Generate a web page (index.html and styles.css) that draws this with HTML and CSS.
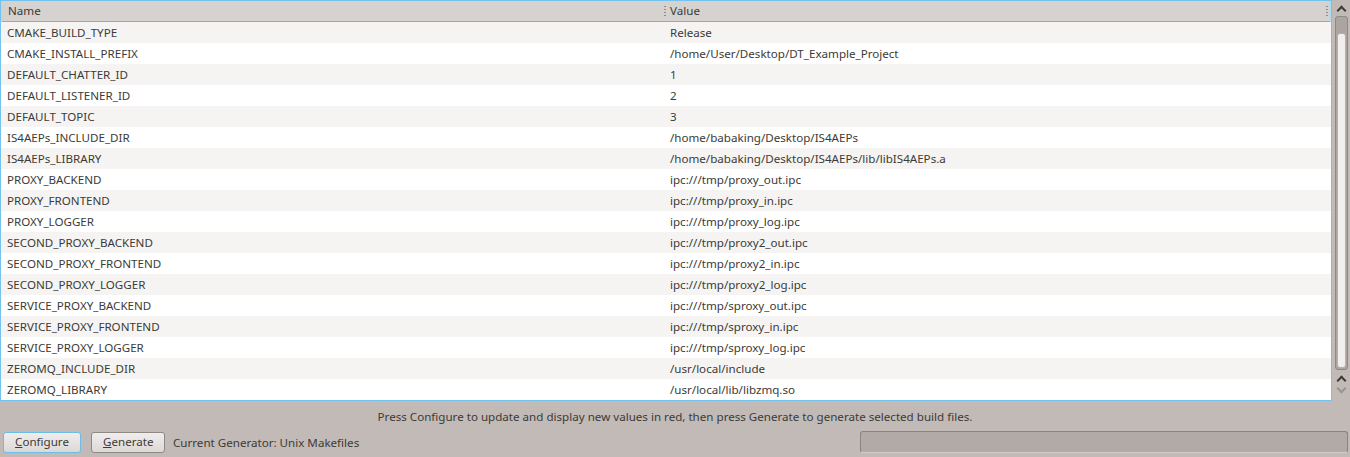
FILE: index.html
```html
<!DOCTYPE html>
<html>
<head>
<meta charset="utf-8">
<link rel="stylesheet" href="styles.css">
</head>
<body>
<div class="app">
  <div class="tablearea">
    <div class="table">
      <div class="header">
        <div class="hcell name">Name</div>
        <div class="grip"></div>
        <div class="hcell value">Value</div>
        <div class="grip right"></div>
      </div>
      <div class="rows">
        <div class="row alt"><div class="cell name">CMAKE_BUILD_TYPE</div><div class="cell value">Release</div></div>
        <div class="row"><div class="cell name">CMAKE_INSTALL_PREFIX</div><div class="cell value">/home/User/Desktop/DT_Example_Project</div></div>
        <div class="row alt"><div class="cell name">DEFAULT_CHATTER_ID</div><div class="cell value">1</div></div>
        <div class="row"><div class="cell name">DEFAULT_LISTENER_ID</div><div class="cell value">2</div></div>
        <div class="row alt"><div class="cell name">DEFAULT_TOPIC</div><div class="cell value">3</div></div>
        <div class="row"><div class="cell name">IS4AEPs_INCLUDE_DIR</div><div class="cell value">/home/babaking/Desktop/IS4AEPs</div></div>
        <div class="row alt"><div class="cell name">IS4AEPs_LIBRARY</div><div class="cell value">/home/babaking/Desktop/IS4AEPs/lib/libIS4AEPs.a</div></div>
        <div class="row"><div class="cell name">PROXY_BACKEND</div><div class="cell value">ipc:///tmp/proxy_out.ipc</div></div>
        <div class="row alt"><div class="cell name">PROXY_FRONTEND</div><div class="cell value">ipc:///tmp/proxy_in.ipc</div></div>
        <div class="row"><div class="cell name">PROXY_LOGGER</div><div class="cell value">ipc:///tmp/proxy_log.ipc</div></div>
        <div class="row alt"><div class="cell name">SECOND_PROXY_BACKEND</div><div class="cell value">ipc:///tmp/proxy2_out.ipc</div></div>
        <div class="row"><div class="cell name">SECOND_PROXY_FRONTEND</div><div class="cell value">ipc:///tmp/proxy2_in.ipc</div></div>
        <div class="row alt"><div class="cell name">SECOND_PROXY_LOGGER</div><div class="cell value">ipc:///tmp/proxy2_log.ipc</div></div>
        <div class="row"><div class="cell name">SERVICE_PROXY_BACKEND</div><div class="cell value">ipc:///tmp/sproxy_out.ipc</div></div>
        <div class="row alt"><div class="cell name">SERVICE_PROXY_FRONTEND</div><div class="cell value">ipc:///tmp/sproxy_in.ipc</div></div>
        <div class="row"><div class="cell name">SERVICE_PROXY_LOGGER</div><div class="cell value">ipc:///tmp/sproxy_log.ipc</div></div>
        <div class="row alt"><div class="cell name">ZEROMQ_INCLUDE_DIR</div><div class="cell value">/usr/local/include</div></div>
        <div class="row"><div class="cell name">ZEROMQ_LIBRARY</div><div class="cell value">/usr/local/lib/libzmq.so</div></div>
      </div>
    </div>
    <div class="scrollbar">
      <div class="arrow up top"></div>
      <div class="groove"><div class="thumb"></div></div>
      <div class="arrow up"></div>
      <div class="arrow down disabled"></div>
    </div>
  </div>
  <div class="message">Press Configure to update and display new values in red, then press Generate to generate selected build files.</div>
  <div class="bottombar">
    <button class="btn default"><u>C</u>onfigure</button>
    <button class="btn"><u>G</u>enerate</button>
    <span class="gen">Current Generator: Unix Makefiles</span>
    <div class="spacer"></div>
    <div class="progress"></div>
  </div>
</div>
</body>
</html>
```

FILE: styles.css
```css
html, body {
  margin: 0;
  padding: 0;
  background: #c2bab6;
  width: 1350px;
  height: 457px;
  overflow: hidden;
}
.app {
  font-family: "Noto Sans", "DejaVu Sans", sans-serif;
  font-size: 11.6px;
  color: #3c3b37;
  display: flex;
  flex-direction: column;
}
.tablearea {
  display: flex;
  height: 401px;
}
.table {
  width: 1330px;
  border: 1px solid #74c2ee;
  box-shadow: inset 0 0 0 1px #a8dcf7;
  background: #ffffff;
  display: flex;
  flex-direction: column;
  overflow: hidden;
}
.header {
  height: 20px;
  background: #d6d2cf;
  border-bottom: 1px solid #a9a4a1;
  display: flex;
  align-items: center;
  margin: 0 1px;
}
.hcell {
  line-height: 20px;
}
.hcell.name {
  width: 656px;
  padding-left: 6px;
}
.hcell.value {
  flex: 1;
  padding-left: 4px;
}
.grip {
  width: 2px;
  height: 11px;
  background: repeating-linear-gradient(to bottom, #8f8a87 0 1px, transparent 1px 3px);
}
.grip.right {
  margin-right: 2px;
}
.rows {
  display: flex;
  flex-direction: column;
}
.row {
  height: 21px;
  box-sizing: border-box;
  padding-bottom: 1px;
  display: flex;
  align-items: center;
  background: #ffffff;
}
.row.alt {
  background: #f5f4f3;
}
.cell.name {
  width: 663px;
  padding-left: 6px;
}
.cell.value {
  flex: 1;
}
.scrollbar {
  width: 18px;
  display: flex;
  flex-direction: column;
  align-items: center;
  padding-top: 3px;
}
.arrow {
  width: 14px;
  height: 12px;
  position: relative;
}
.arrow::before {
  content: "";
  position: absolute;
  left: 4px;
  top: 4px;
  width: 5px;
  height: 5px;
  border-left: 2px solid #3c3b37;
  border-top: 2px solid #3c3b37;
  transform: rotate(45deg);
}
.arrow.down::before {
  top: 0px;
  transform: rotate(225deg);
}
.arrow.disabled::before {
  border-color: #9a9390;
}
.groove {
  width: 13px;
  height: 354px;
  margin: 1px 0 3px;
  box-sizing: border-box;
  border: 1px solid #8f8985;
  border-radius: 3px;
  background: #aba4a0;
  display: flex;
  flex-direction: column;
  justify-content: flex-end;
  padding: 1px;
}
.thumb {
  height: 333px;
  border-radius: 3px;
  background: #f1efee;
  border: 1px solid #b6afab;
}
.message {
  text-align: center;
  height: 28px;
  line-height: 28px;
  margin-top: 2px;
}
.bottombar {
  display: flex;
  align-items: center;
  padding: 0 3px;
  height: 22px;
}
.btn {
  font-family: inherit;
  font-size: 11.6px;
  color: #3c3b37;
  height: 21px;
  padding: 0 11px;
  border: 1px solid #8f8985;
  border-radius: 3px;
  background: linear-gradient(#f0eeed, #dcd8d6);
  margin-right: 10px;
  line-height: 18px;
}
.btn.default {
  border-color: #6cbce8;
  width: 78px;
}
.btn:not(.default) {
  width: 74px;
}
.btn u {
  text-decoration: underline;
}
.gen {
  margin-left: -2px;
}
.spacer {
  flex: 1;
}
.progress {
  width: 488px;
  height: 22px;
  box-sizing: border-box;
  border: 1px solid #8a8481;
  border-bottom-color: #d3ceca;
  border-radius: 3px;
  background: #b1aaa6;
  margin-right: -1px;
}
```
